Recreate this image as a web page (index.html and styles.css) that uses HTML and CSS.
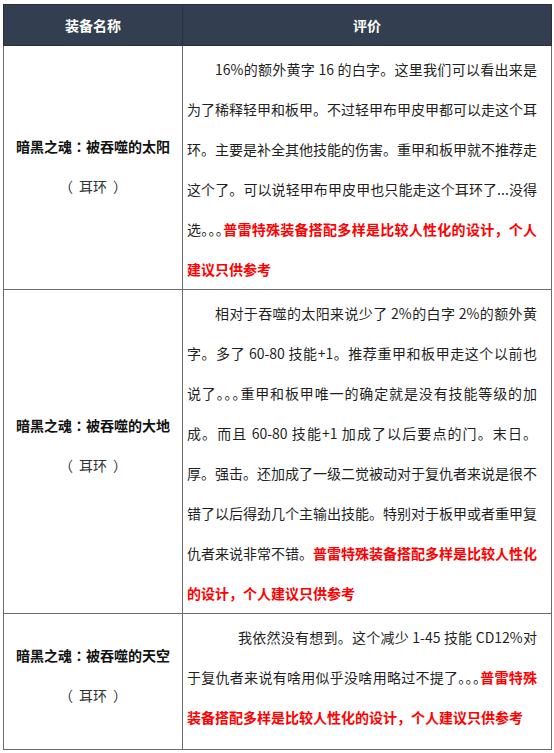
FILE: index.html
```html
<!DOCTYPE html>
<html lang="zh-CN">
<head>
<meta charset="utf-8">
<title>装备评价</title>
<link rel="stylesheet" href="styles.css">
</head>
<body>
<div class="page">
<table class="gear">
  <thead>
    <tr>
      <th class="col-name">装备名称</th>
      <th class="col-eval">评价</th>
    </tr>
  </thead>
  <tbody>
    <tr>
      <td class="name">
        <div class="title">暗黑之魂<span class="colon" lang="zh-TW">：</span>被吞噬的太阳</div>
        <div class="type">（<span class="type-word">耳环</span>）</div>
      </td>
      <td class="eval">
        <span class="line full indent">16%的额外黄字 16 的白字。这里我们可以看出来是</span>
        <span class="line full">为了稀释轻甲和板甲。不过轻甲布甲皮甲都可以走这个耳</span>
        <span class="line full">环。主要是补全其他技能的伤害。重甲和板甲就不推荐走</span>
        <span class="line full">这个了。可以说轻甲布甲皮甲也只能走这个耳环了...没得</span>
        <span class="line full">选<span class="dots">。。。</span><strong class="red">普雷特殊装备搭配多样是比较人性化的设计，个人</strong></span>
        <span class="line"><strong class="red">建议只供参考</strong></span>
      </td>
    </tr>
    <tr>
      <td class="name raised">
        <div class="title">暗黑之魂<span class="colon" lang="zh-TW">：</span>被吞噬的大地</div>
        <div class="type">（<span class="type-word">耳环</span>）</div>
      </td>
      <td class="eval">
        <span class="line full indent">相对于吞噬的太阳来说少了 2%的白字 2%的额外黄</span>
        <span class="line full">字。多了 60-80 技能+1。推荐重甲和板甲走这个以前也</span>
        <span class="line full">说了<span class="dots">。。。</span>重甲和板甲唯一的确定就是没有技能等级的加</span>
        <span class="line full">成。而且 60-80 技能+1 加成了以后要点的门。末日。</span>
        <span class="line full">厚。强击。还加成了一级二觉被动对于复仇者来说是很不</span>
        <span class="line full">错了以后得劲几个主输出技能。特别对于板甲或者重甲复</span>
        <span class="line full">仇者来说非常不错。<strong class="red">普雷特殊装备搭配多样是比较人性化</strong></span>
        <span class="line"><strong class="red">的设计，个人建议只供参考</strong></span>
      </td>
    </tr>
    <tr>
      <td class="name raised">
        <div class="title">暗黑之魂<span class="colon" lang="zh-TW">：</span>被吞噬的天空</div>
        <div class="type">（<span class="type-word">耳环</span>）</div>
      </td>
      <td class="eval last">
        <span class="line full indent-wide">我依然没有想到。这个减少 1-45 技能 CD12%对</span>
        <span class="line full">于复仇者来说有啥用似乎没啥用略过不提了<span class="dots">。。。</span><strong class="red">普雷特殊</strong></span>
        <span class="line"><strong class="red">装备搭配多样是比较人性化的设计，个人建议只供参考</strong></span>
      </td>
    </tr>
  </tbody>
</table>
</div>
</body>
</html>
```

FILE: styles.css
```css
html, body {
  margin: 0;
  padding: 0;
  background: #ffffff;
}

body {
  font-family: "Noto Sans CJK SC", "Noto Sans", "Liberation Sans", sans-serif;
  font-size: 14px;
  color: #1f1f1f;
}

.page {
  padding: 4px 3px 0 3px;
}

.gear {
  width: 548px;
  border-collapse: collapse;
  table-layout: fixed;
}

.gear th,
.gear td {
  border: 1px solid #6b6b6b;
}

.gear th {
  background: #333f50;
  color: #ffffff;
  font-weight: 700;
  height: 40px;
  padding: 0;
  line-height: 20px;
  text-align: center;
  border-color: #2a2f38;
}

.col-name {
  width: 178px;
}

.col-eval {
  width: 368px;
}

.name {
  text-align: center;
  vertical-align: middle;
  padding: 0 4px 4px 4px;
}

.name.raised {
  padding-bottom: 14px;
}

.title {
  font-weight: 700;
  line-height: 40px;
  color: #111111;
}

.colon {
  font-family: "Noto Sans CJK TC", "Noto Sans CJK SC", sans-serif;
}

.type {
  line-height: 40px;
  color: #333333;
}

.type-word {
  margin: 0 6px;
}

.eval {
  padding: 3px 14px 0 4px;
  vertical-align: top;
  line-height: 40px;
}

.eval.last {
  padding-bottom: 12px;
}

.line {
  display: block;
  white-space: nowrap;
}

.line.full {
  text-align: justify;
  text-align-last: justify;
}

.indent {
  padding-left: 28px;
}

.indent-wide {
  padding-left: 51px;
}

.dots {
  font-feature-settings: "halt";
}

.red {
  color: #ff0000;
  font-weight: 700;
}
```
